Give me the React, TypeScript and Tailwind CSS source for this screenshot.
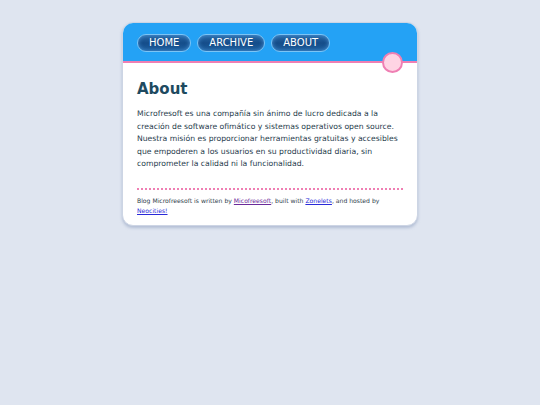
const links = ["HOME", "ARCHIVE", "ABOUT"];

const NavButton = ({ label }: { label: string }) => (
  <a
    href="#"
    className="h-[18px] px-[11px] flex items-center rounded-full border border-[#7cc4f5] bg-gradient-to-b from-[#2a6aa8] via-[#154d8a] to-[#1d5e9e] text-white text-[10px] leading-none shadow-[inset_0_0_4px_rgba(90,170,240,0.7)]"
  >
    {label}
  </a>
);

export default function App() {
  return (
    <div className="min-h-[405px] w-full bg-[#dfe5f0] pt-[22px] font-['DejaVu_Sans',Verdana,sans-serif]">
      <div className="mx-auto w-[296px] rounded-[11px] border border-[#cdd5e4] bg-white shadow-[0_2px_3px_rgba(150,165,195,0.6)] overflow-hidden">
        <div className="relative bg-[#24a2f5] h-[40px] border-b-2 border-[#ef7fb3] flex items-start gap-[6px] pt-[11px] pl-[14px]">
          {links.map((l) => (
            <NavButton key={l} label={l} />
          ))}
          <div className="absolute right-[14px] top-[29px] w-[21px] h-[21px] rounded-full bg-[#ffd4e4] border-2 border-[#ef7fb3]" />
        </div>
        <div className="px-[14px] pt-[16px] pb-[9px]">
          <h1 className="text-[15px] font-bold leading-[20px] text-[#1e4a60]">About</h1>
          <p className="mt-[9px] text-[7.7px] leading-[12.5px] text-[#1f3b4c]">
            Microfresoft es una compañía sin ánimo de lucro dedicada a la creación de software
            ofimático y sistemas operativos open source. Nuestra misión es proporcionar
            herramientas gratuitas y accesibles que empoderen a los usuarios en su productividad
            diaria, sin comprometer la calidad ni la funcionalidad.
          </p>
          <div className="mt-[17px] border-t-2 border-dotted border-[#ef7fb3]" />
          <p className="mt-[6px] text-[6.1px] leading-[10px] text-[#2e3e4c]">
            Blog Microfreesoft is written by{" "}
            <a href="#" className="underline text-[#6a2b9a]">Micofreesoft</a>, built with{" "}
            <a href="#" className="underline text-[#2a2ad8]">Zonelets</a>, and hosted by{" "}
            <a href="#" className="underline text-[#2a2ad8]">Neocities!</a>
          </p>
        </div>
      </div>
    </div>
  );
}
